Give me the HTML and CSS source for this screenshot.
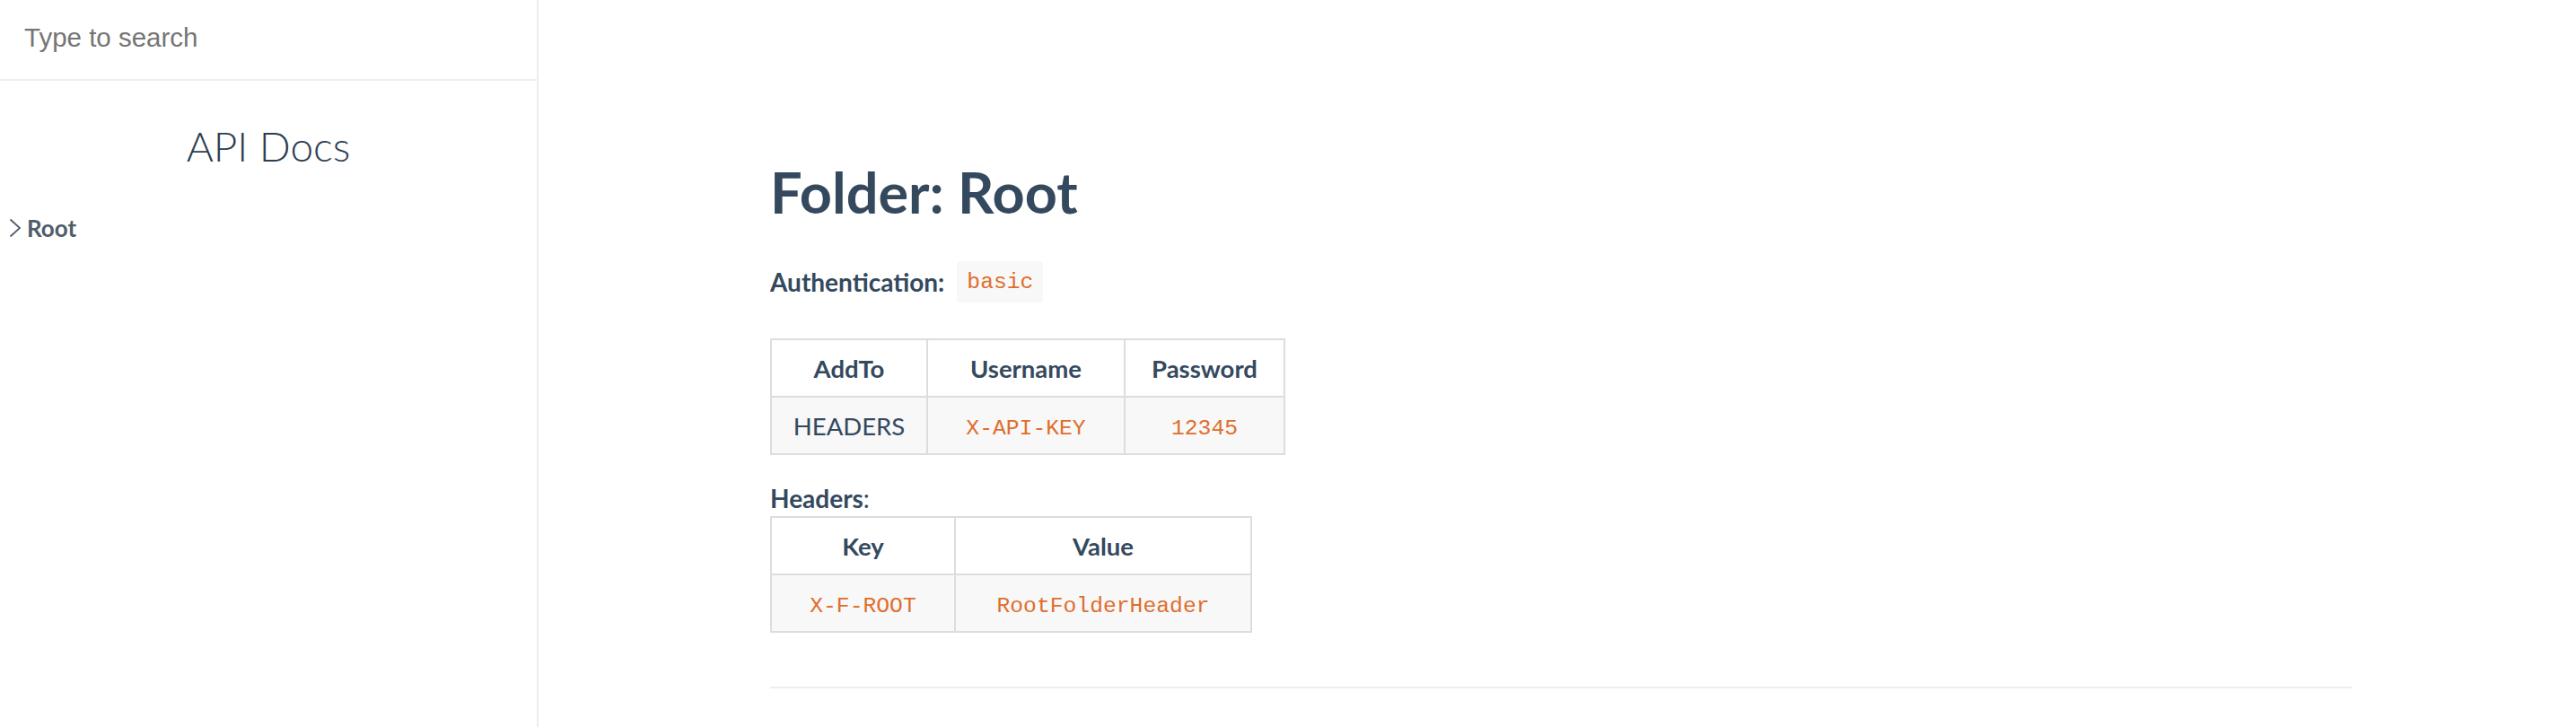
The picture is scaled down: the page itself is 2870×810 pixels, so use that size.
FILE: index.html
```html
<!DOCTYPE html>
<html lang="en">
<head>
<meta charset="utf-8">
<title>API Docs</title>
<link rel="stylesheet" href="styles.css">
</head>
<body>
<div class="app">
  <aside class="sidebar">
    <div class="search">
      <input class="search-input" type="text" placeholder="Type to search">
    </div>
    <h1 class="app-name">API Docs</h1>
    <ul class="nav">
      <li class="nav-item">
        <svg class="chevron" width="14" height="22" viewBox="0 0 14 22"><polyline points="1.5,1.5 12,11 1.5,20.5" fill="none" stroke="#505d6b" stroke-width="1.8"/></svg>
        <span class="nav-label">Root</span>
      </li>
    </ul>
  </aside>
  <main class="content">
    <section class="markdown">
      <h1 class="title">Folder: Root</h1>
      <p class="auth"><strong>Authentication:</strong><code class="code">basic</code></p>
      <table class="tbl tbl-auth">
        <colgroup><col class="c-addto"><col class="c-user"><col class="c-pass"></colgroup>
        <thead><tr><th>AddTo</th><th>Username</th><th>Password</th></tr></thead>
        <tbody><tr><td>HEADERS</td><td><code class="code-plain">X-API-KEY</code></td><td><code class="code-plain">12345</code></td></tr></tbody>
      </table>
      <p class="hdr"><strong>Headers</strong>:</p>
      <table class="tbl tbl-headers">
        <colgroup><col class="c-key"><col class="c-value"></colgroup>
        <thead><tr><th>Key</th><th>Value</th></tr></thead>
        <tbody><tr><td><code class="code-plain">X-F-ROOT</code></td><td><code class="code-plain">RootFolderHeader</code></td></tr></tbody>
      </table>
      <hr class="rule">
    </section>
  </main>
</div>
</body>
</html>
```

FILE: styles.css
```css
html, body {
  margin: 0;
  padding: 0;
  background: #fff;
}
body {
  font-family: Lato, "Noto Sans", sans-serif;
  color: #34495e;
  font-size: 29px;
}
.app {
  display: flex;
  height: 810px;
}
.sidebar {
  width: 598px;
  flex: 0 0 598px;
  border-right: 2px solid #ededed;
  display: flex;
  flex-direction: column;
}
.search {
  height: 88px;
  border-bottom: 2px solid #eee;
  display: flex;
  align-items: center;
}
.search-input {
  border: none;
  outline: none;
  width: 100%;
  padding: 0 0 0 27px;
  margin-top: -4px;
  font-family: "Liberation Sans", Arial, sans-serif;
  font-size: 29.5px;
  color: #34495e;
  background: transparent;
}
.search-input::placeholder {
  color: #757575;
}
.app-name {
  margin: 46px 0 0;
  height: 53px;
  line-height: 53px;
  text-align: center;
  font-size: 46px;
  font-weight: 300;
  color: #2c3e50;
}
.nav {
  list-style: none;
  margin: 45px 0 0;
  padding: 0 0 0 10px;
}
.nav-item {
  display: flex;
  align-items: center;
  height: 40px;
  gap: 6px;
}
.chevron {
  display: block;
}
.nav-label {
  font-size: 26px;
  font-weight: 700;
  color: #505d6b;
}
.content {
  flex: 1;
  padding: 0 249px 0 258px;
}
.markdown {
  padding-top: 176px;
}
.title {
  margin: 0;
  height: 76px;
  line-height: 76px;
  font-size: 63px;
  font-weight: 700;
  color: #34495e;
}
.auth {
  margin: 39px 0 0;
  height: 46px;
  display: flex;
  align-items: center;
  gap: 14px;
}
.auth strong, .hdr strong {
  font-weight: 700;
}
.auth strong {
  font-size: 28px;
}
.code {
  font-family: "Liberation Mono", "DejaVu Sans Mono", monospace;
  font-size: 24.7px;
  color: #e06d2c;
  background: #f8f8f8;
  border-radius: 4px;
  height: 46px;
  line-height: 46px;
  padding: 0 11px;
}
.code-plain {
  font-family: "Liberation Mono", "DejaVu Sans Mono", monospace;
  font-size: 24.7px;
  color: #e06d2c;
}
.tbl {
  border-collapse: collapse;
  table-layout: fixed;
  margin-top: 40px;
}
.tbl th, .tbl td {
  border: 2px solid #ddd;
  height: 62px;
  padding: 0 10px;
  text-align: center;
  font-size: 27.5px;
  color: #34495e;
}
.tbl th {
  font-weight: 700;
}
.tbl tbody tr {
  background: #f8f8f8;
}
.tbl td {
  font-weight: 400;
}
.c-addto { width: 174px; }
.c-user { width: 220px; }
.c-pass { width: 178px; }
.c-key { width: 205px; }
.c-value { width: 330px; }
.hdr {
  margin: 28px 0 0;
  height: 40px;
  line-height: 40px;
  font-size: 28px;
}
.tbl-headers {
  margin-top: 0;
}
.rule {
  margin: 60px 0 0;
  border: none;
  height: 2px;
  background: #eee;
}
```
